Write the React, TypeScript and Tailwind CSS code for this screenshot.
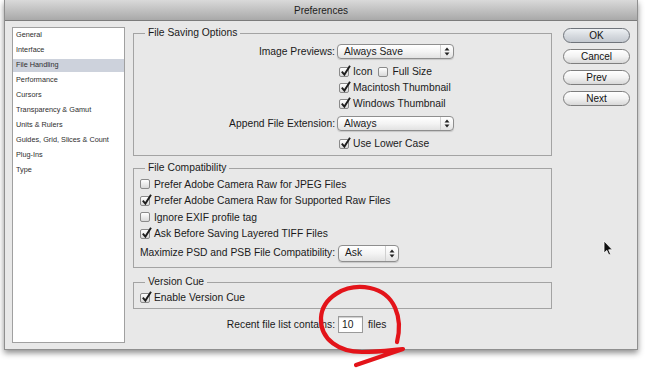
import React from 'react'

const items = [
  'General',
  'Interface',
  'File Handling',
  'Performance',
  'Cursors',
  'Transparency & Gamut',
  'Units & Rulers',
  'Guides, Grid, Slices & Count',
  'Plug-Ins',
  'Type',
]

const Check = ({ on }: { on?: boolean }) => (
  <span className="relative w-[10px] h-[10px] shrink-0 rounded-[2px] border border-[#8a8a8a] bg-linear-to-b from-white to-[#d9d9d9]">
    {on && (
      <svg
        className="absolute -top-[3px] left-[0px] overflow-visible"
        width="12"
        height="12"
        viewBox="0 0 12 12"
      >
        <path d="M1.8 6.6 L4.4 9.6 L10 0.8" stroke="#1d1d1d" strokeWidth="1.9" fill="none" />
      </svg>
    )}
  </span>
)

const CheckRow = ({ on, label, h = 'h-[16px]', mt = '' }: { on?: boolean; label: string; h?: string; mt?: string }) => (
  <div className={`flex items-center gap-[4px] whitespace-nowrap ${h} ${mt}`}>
    <Check on={on} />
    <span>{label}</span>
  </div>
)

const Arrows = () => (
  <svg width="6" height="9" viewBox="0 0 6 9">
    <path d="M3 0.5 L5.5 3.5 L0.5 3.5 Z" fill="#222" />
    <path d="M3 8.5 L5.5 5.5 L0.5 5.5 Z" fill="#222" />
  </svg>
)

const Select = ({ value, w, h }: { value: string; w: string; h: string }) => (
  <div
    className={`${w} ${h} flex items-center rounded-[4px] border border-[#8e8e8e] bg-linear-to-b from-white via-[#f4f4f4] to-[#e2e2e2] shadow-[0_1px_1px_rgba(0,0,0,0.15)]`}
  >
    <span className="flex-1 pl-[6px]">{value}</span>
    <span className="w-[13px] h-full flex items-center justify-center border-l border-[#d0d0d0]">
      <Arrows />
    </span>
  </div>
)

const Btn = ({ label, primary }: { label: string; primary?: boolean }) => (
  <button
    className={`w-[67px] h-[15px] rounded-full border text-[10px] leading-none text-[#111] ${
      primary
        ? 'border-[#6f747b] bg-linear-to-b from-[#eef1f4] via-[#d7dbe0] to-[#c4c9d0]'
        : 'border-[#7e7e7e] bg-linear-to-b from-white via-[#f2f2f2] to-[#d8d8d8]'
    }`}
  >
    {label}
  </button>
)

const Group = ({ title, className, children }: { title: string; className?: string; children: React.ReactNode }) => (
  <fieldset className={`w-[419px] border border-[#a3a3a3] pl-[6px] ${className ?? ''}`}>
    <legend className="ml-[5px] px-[3px] leading-[12px]">{title}</legend>
    {children}
  </fieldset>
)

export default function App() {
  return (
    <div className="relative w-[647px] h-[368px] overflow-hidden bg-white text-[10.3px] text-[#1a1a1a] font-['Liberation_Sans',Arial,sans-serif]">
      <div className="ml-[4px] w-[634px] h-[350px] flex flex-col bg-[#e8e8e8] border-x border-b border-[#8f8f8f] shadow-[0_3px_6px_rgba(0,0,0,0.45)]">
        {/* title bar */}
        <div className="h-[21px] shrink-0 flex items-center justify-center bg-linear-to-b from-[#dadada] to-[#a9a9a9] border-b border-[#7c7c7c] text-[10px] text-[#1c1c1c]">
          Preferences
        </div>

        <div className="flex flex-1 pt-[6px] pl-[7px]">
          {/* sidebar */}
          <div className="w-[113px] h-[316px] bg-white border border-[#a0a0a0] text-[7.3px] text-[#2e2e2e]">
            {items.map((it) => (
              <div key={it} className="h-[15px] flex items-center">
                <div
                  className={`w-full h-[13px] flex items-center pl-[3px] whitespace-nowrap ${
                    it === 'File Handling' ? 'bg-[#cdd2dc]' : ''
                  }`}
                >
                  {it}
                </div>
              </div>
            ))}
          </div>

          {/* main */}
          <div className="ml-[8px] flex flex-col">
            <Group title="File Saving Options" className="pb-[3px]">
              <div className="mt-[5px] h-[15px] flex items-center">
                <span className="w-[195px] text-right whitespace-nowrap">Image Previews:</span>
                <span className="ml-[2px]">
                  <Select value="Always Save" w="w-[117px]" h="h-[15px]" />
                </span>
              </div>
              <div className="ml-[199px] mt-[5px] flex flex-col">
                <div className="h-[16px] flex items-center">
                  <CheckRow on label="Icon" />
                  <span className="ml-[6px]">
                    <CheckRow label="Full Size" />
                  </span>
                </div>
                <CheckRow on label="Macintosh Thumbnail" />
                <CheckRow on label="Windows Thumbnail" />
              </div>
              <div className="mt-[4px] h-[15px] flex items-center">
                <span className="w-[195px] text-right whitespace-nowrap">Append File Extension:</span>
                <span className="ml-[2px]">
                  <Select value="Always" w="w-[117px]" h="h-[15px]" />
                </span>
              </div>
              <div className="ml-[199px] mt-[5px]">
                <CheckRow on label="Use Lower Case" />
              </div>
            </Group>

            <Group title="File Compatibility" className="mt-[6px] pb-[5px]">
              <div className="mt-[2px] flex flex-col">
                <CheckRow label="Prefer Adobe Camera Raw for JPEG Files" h="h-[16.5px]" />
                <CheckRow on label="Prefer Adobe Camera Raw for Supported Raw Files" h="h-[16.5px]" />
                <CheckRow label="Ignore EXIF profile tag" h="h-[16.5px]" />
                <CheckRow on label="Ask Before Saving Layered TIFF Files" h="h-[16.5px]" />
              </div>
              <div className="mt-[2px] h-[18px] flex items-center">
                <span className="w-[195px] whitespace-nowrap">Maximize PSD and PSB File Compatibility:</span>
                <span className="ml-[3px]">
                  <Select value="Ask" w="w-[61px]" h="h-[17px]" />
                </span>
              </div>
            </Group>

            <Group title="Version Cue" className="mt-[8px] pb-[2px]">
              <CheckRow on label="Enable Version Cue" mt="mt-[2px]" />
            </Group>

            <div className="mt-[7px] h-[17px] flex items-center">
              <span className="w-[202px] text-right whitespace-nowrap">Recent file list contains:</span>
              <span className="ml-[3px] w-[25px] h-[17px] flex items-center pl-[3px] bg-white border border-[#9a9a9a] shadow-[inset_0_1px_1px_rgba(0,0,0,0.2)]">
                10
              </span>
              <span className="ml-[5px]">files</span>
            </div>
          </div>

          {/* buttons */}
          <div className="ml-[11px] pt-[1px] flex flex-col gap-[6px]">
            <Btn label="OK" primary />
            <Btn label="Cancel" />
            <Btn label="Prev" />
            <Btn label="Next" />
          </div>
        </div>
      </div>

      {/* mouse pointer */}
      <svg className="absolute left-[603px] top-[240px]" width="11" height="17" viewBox="0 0 11 17">
        <path d="M1 1 L1 13 L3.8 10.4 L5.8 15 L7.6 14.2 L5.7 9.8 L9.4 9.8 Z" fill="#111" stroke="#fff" strokeWidth="0.8" />
      </svg>

      {/* red annotation */}
      <svg className="absolute inset-0 pointer-events-none" width="647" height="368" viewBox="0 0 647 368">
        <path
          d="M 397 342 C 403 318, 395 293, 370 288 C 345 283, 322 298, 321 318 C 320 340, 340 352, 362 352 C 378 352, 392 350, 403 349 L 356 365"
          stroke="#e3141a"
          strokeWidth="4.2"
          strokeLinecap="round"
          strokeLinejoin="round"
          fill="none"
        />
      </svg>
    </div>
  )
}
